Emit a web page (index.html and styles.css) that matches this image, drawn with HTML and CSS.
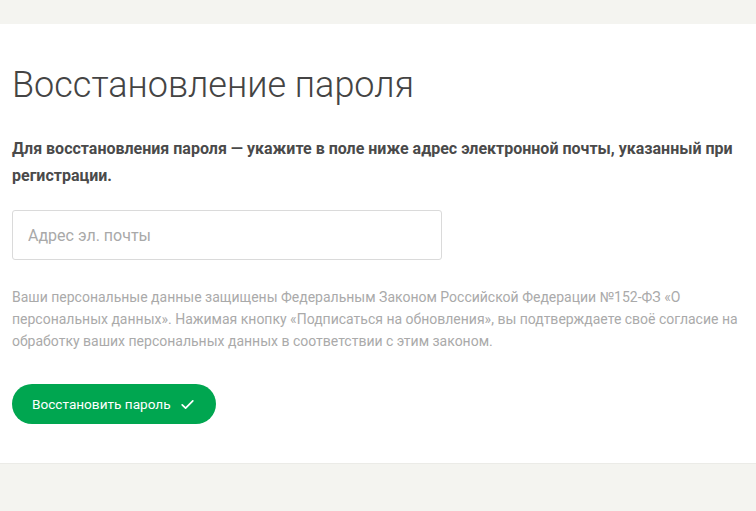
FILE: index.html
```html
<!DOCTYPE html>
<html lang="ru">
<head>
<meta charset="utf-8">
<link rel="stylesheet" href="styles.css">
</head>
<body>
<div class="top-band"></div>
<main class="content">
  <h1 class="title">Восстановление пароля</h1>
  <p class="lead">Для восстановления пароля — укажите в поле ниже адрес электронной почты, указанный при регистрации.</p>
  <div class="field"><input class="input" type="text" placeholder="Адрес эл. почты"></div>
  <p class="note">Ваши персональные данные защищены Федеральным Законом Российской Федерации №152-ФЗ «О персональных данных». Нажимая кнопку «Подписаться на обновления», вы подтверждаете своё согласие на обработку ваших персональных данных в соответствии с этим законом.</p>
  <button class="btn" type="button">Восстановить пароль
    <svg class="check" width="13" height="11" viewBox="0 0 13 11"><path d="M1.2 5.8 L4.6 9.2 L11.8 1.8" fill="none" stroke="#fff" stroke-width="1.7" stroke-linecap="round" stroke-linejoin="round"/></svg>
  </button>
</main>
<div class="bottom-band"></div>
</body>
</html>
```
FILE: styles.css
```css
html, body { margin: 0; padding: 0; }
body {
  background: #f4f4f0;
  font-family: Roboto, "Liberation Sans", Arial, sans-serif;
  height: 511px;
  overflow: hidden;
}
.top-band { height: 24px; background: #f4f4f0; }
.content {
  background: #fff;
  height: 440px;
  box-sizing: border-box;
  padding: 39px 12px 0 12px;
  border-bottom: 1px solid #ebebe7;
}
.title {
  margin: 0;
  font-weight: 300;
  font-size: 36px;
  line-height: 44px;
  color: #444;
  letter-spacing: 0;
}
.lead {
  margin: 28px 0 0 0;
  font-weight: 700;
  font-size: 16px;
  line-height: 27px;
  color: #4a4a4a;
}
.field { margin-top: 21px; }
.input {
  display: block;
  width: 430px;
  height: 50px;
  box-sizing: border-box;
  border: 1px solid #dadada;
  border-radius: 3px;
  padding: 0 15px;
  font-family: Roboto, "Liberation Sans", Arial, sans-serif;
  font-size: 16px;
  color: #444;
  outline: none;
}
.input::placeholder { color: #a9a9a9; }
.note {
  margin: 26px 0 0 0;
  font-size: 14px;
  line-height: 22px;
  color: #aaaaaa;
}
.btn {
  margin-top: 32px;
  display: inline-flex;
  align-items: center;
  gap: 10px;
  height: 40px;
  padding: 0 22px 0 20px;
  border: none;
  border-radius: 20px;
  background: #00a650;
  color: #fff;
  font-family: Roboto, "Liberation Sans", Arial, sans-serif;
  font-size: 13.6px;
  cursor: pointer;
}
.check { display: block; }
.bottom-band { height: 47px; background: #f4f4f0; }
```
